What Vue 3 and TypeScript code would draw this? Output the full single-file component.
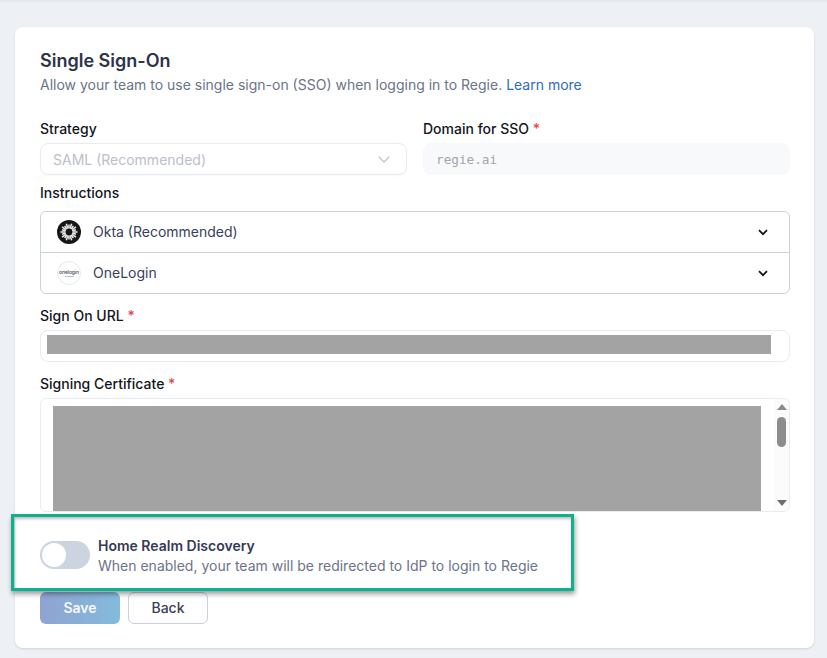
<script setup lang="ts">
const rows: { name: string; logo: 'okta' | 'onelogin' }[] = [
  { name: 'Okta (Recommended)', logo: 'okta' },
  { name: 'OneLogin', logo: 'onelogin' },
]
const spokes = Array.from({ length: 20 }, (_, i) => ({ angle: i * 18, top: i % 2 ? 3.4 : 4.6 }))
</script>

<template>
  <div class="page">
    <div class="topline"></div>
    <section class="card">
      <h1>Single Sign-On</h1>
      <p class="desc">
        Allow your team to use single sign-on (SSO) when logging in to Regie.
        <a class="link">Learn more</a>
      </p>

      <div class="two">
        <div>
          <label class="lbl">Strategy</label>
          <div class="select">
            <span>SAML (Recommended)</span>
            <svg width="12" height="7" viewBox="0 0 12 7" fill="none">
              <path d="M.7.7L6 6l5.3-5.3" stroke="#c3c6d0" stroke-width="1.4" />
            </svg>
          </div>
        </div>
        <div>
          <label class="lbl">Domain for SSO <i>*</i></label>
          <div class="domain">regie.ai</div>
        </div>
      </div>

      <label class="lbl instr">Instructions</label>
      <div class="accordion">
        <div v-for="r in rows" :key="r.name" class="row">
          <svg v-if="r.logo === 'okta'" class="logo" viewBox="0 0 24 24">
            <circle cx="12" cy="12" r="12" fill="#161616" />
            <g stroke="#ececec" stroke-width="1.5">
              <line v-for="s in spokes" :key="s.angle" x1="12" :y1="s.top" x2="12" y2="8.9" :transform="`rotate(${s.angle} 12 12)`" />
            </g>
            <circle cx="12" cy="12" r="3.4" fill="#161616" />
          </svg>
          <span v-else class="logo ol">
            <b>onelogin</b>
            <em></em>
          </span>
          <span class="rname">{{ r.name }}</span>
          <svg class="chev" width="10" height="7" viewBox="0 0 10 7" fill="none">
            <path d="M1 1.2l4 4 4-4" stroke="#111" stroke-width="1.7" />
          </svg>
        </div>
      </div>

      <label class="lbl url">Sign On URL <i>*</i></label>
      <div class="urlbox"><div class="redact"></div></div>

      <label class="lbl cert">Signing Certificate <i>*</i></label>
      <div class="certbox">
        <div class="redact"></div>
        <div class="scroll">
          <svg width="10" height="6" viewBox="0 0 10 6"><path d="M5 0l5 6H0z" fill="#8a8a8a" /></svg>
          <div class="thumb"></div>
          <svg class="down" width="10" height="6" viewBox="0 0 10 6"><path d="M5 6l5-6H0z" fill="#6e6e6e" /></svg>
        </div>
      </div>

      <div class="hrd">
        <div class="toggle"><span class="knob"></span></div>
        <div>
          <div class="hrd-title">Home Realm Discovery</div>
          <div class="hrd-sub">When enabled, your team will be redirected to IdP to login to Regie</div>
        </div>
      </div>

      <div class="actions">
        <button class="save">Save</button>
        <button class="back">Back</button>
      </div>

      <div class="highlight"></div>
    </section>
  </div>
</template>

<style>
html, body { margin: 0; background: #edf1f6; }
</style>

<style scoped>
* { box-sizing: border-box; }
.page {
  width: 827px;
  height: 658px;
  overflow: hidden;
  background: #edf1f6;
  font-family: Inter, "Noto Sans", sans-serif;
  padding: 0 13px 0 15px;
}
.topline { height: 2px; margin: 0 -13px 25px -15px; background: #e4e8ef; }
.card {
  position: relative;
  height: 621px;
  background: #fff;
  border-radius: 8px;
  box-shadow: 0 1px 2px rgba(60, 70, 100, 0.18);
  padding: 22px 24px 0 25px;
}
h1 {
  margin: 0;
  font-size: 18px;
  line-height: 24px;
  font-weight: 600;
  color: #2d3348;
}
.desc {
  margin: 2px 0 0;
  font-size: 14px;
  line-height: 20px;
  color: #6b7488;
}
.link { color: #2f6db5; }
.two {
  display: grid;
  grid-template-columns: 367px 367px;
  gap: 16px;
  margin-top: 24px;
}
.lbl {
  display: block;
  font-size: 14px;
  line-height: 20px;
  font-weight: 500;
  color: #14161c;
}
.lbl i { color: #e5484d; font-style: normal; }
.select, .domain {
  height: 32px;
  margin-top: 4px;
  border-radius: 8px;
  font-size: 14px;
  display: flex;
  align-items: center;
  padding: 0 12px;
}
.select {
  border: 1px solid #e9ebf3;
  color: #bcc0ca;
  justify-content: space-between;
  padding-right: 16px;
  box-shadow: 0 1px 2px rgba(60, 70, 100, 0.05);
}
.domain {
  background: #f8f9fb;
  padding: 0 13px;
  font-family: "DejaVu Sans Mono", "Liberation Mono", monospace;
  font-size: 12.7px;
  color: #a3a5ab;
}
.instr { margin-top: 8px; }
.accordion {
  margin-top: 8px;
  height: 83px;
  border: 1px solid #cbd3e1;
  border-radius: 6px;
}
.row {
  height: 40px;
  display: flex;
  align-items: center;
  padding: 0 21px 0 16px;
}
.row + .row { height: 41px; border-top: 1px solid #cbd3e1; }
.logo { width: 24px; height: 24px; flex: none; }
.ol {
  display: flex;
  flex-direction: column;
  align-items: center;
  justify-content: center;
  border: 1px solid #e8e8e8;
  border-radius: 50%;
  background: #fff;
}
.ol b {
  font-size: 5px;
  line-height: 5px;
  font-weight: 500;
  color: #444;
  letter-spacing: -0.1px;
}
.ol em { width: 9px; height: 1px; margin-top: 1px; background: #a9c7d8; }
.rname {
  flex: 1;
  margin-left: 12px;
  padding-bottom: 2px;
  font-size: 14px;
  color: #39415a;
}
.url { margin-top: 12px; }
.urlbox {
  margin-top: 4px;
  height: 32px;
  border: 1px solid #e9ebf3;
  border-radius: 8px;
  padding: 4px 18px 0 6px;
}
.urlbox .redact { height: 19px; background: #a3a3a3; }
.cert { margin-top: 12px; }
.certbox {
  position: relative;
  margin-top: 4px;
  height: 114px;
  border: 1px solid #e9ebf3;
  border-radius: 6px;
  padding: 7px 28px 0 12px;
}
.certbox .redact { height: 105px; background: #a3a3a3; }
.scroll {
  position: absolute;
  top: 0;
  right: 0;
  bottom: 0;
  width: 15px;
  background: #fbfbfb;
  border-radius: 0 6px 6px 0;
  display: flex;
  flex-direction: column;
  align-items: center;
  padding: 5px 0 5px;
}
.thumb {
  width: 9px;
  height: 30px;
  margin-top: 7px;
  border-radius: 5px;
  background: #8c8c8c;
}
.down { margin-top: auto; }
.hrd {
  display: flex;
  margin-top: 24px;
  height: 40px;
}
.toggle {
  width: 50px;
  height: 28px;
  margin-top: 5px;
  border-radius: 14px;
  background: #ccd4e2;
  padding: 2px;
  flex: none;
}
.knob {
  display: block;
  width: 24px;
  height: 24px;
  border-radius: 50%;
  background: #fff;
}
.hrd > div:last-child { margin-left: 8px; }
.hrd-title {
  font-size: 14px;
  line-height: 20px;
  font-weight: 600;
  color: #343b52;
}
.hrd-sub {
  font-size: 14px;
  line-height: 20px;
  color: #6b7488;
}
.actions {
  display: flex;
  gap: 8px;
  margin-top: 16px;
}
button {
  width: 80px;
  height: 32px;
  border-radius: 6px;
  font-family: inherit;
  font-size: 14px;
  font-weight: 500;
  padding: 0 0 2px;
}
.save {
  border: 0;
  color: #f6f9fd;
  font-weight: 600;
  background: linear-gradient(90deg, #8fa3d1, #84bbdd);
}
.back {
  border: 1px solid #ccd0dc;
  background: #fff;
  color: #39415a;
}
.highlight {
  position: absolute;
  left: -4px;
  top: 487px;
  width: 563px;
  height: 77px;
  border: 3px solid #0db190;
  box-shadow: 1px 3px 5px rgba(0, 0, 0, 0.4), inset 1px 2px 3px rgba(0, 0, 0, 0.25);
  pointer-events: none;
}
</style>
